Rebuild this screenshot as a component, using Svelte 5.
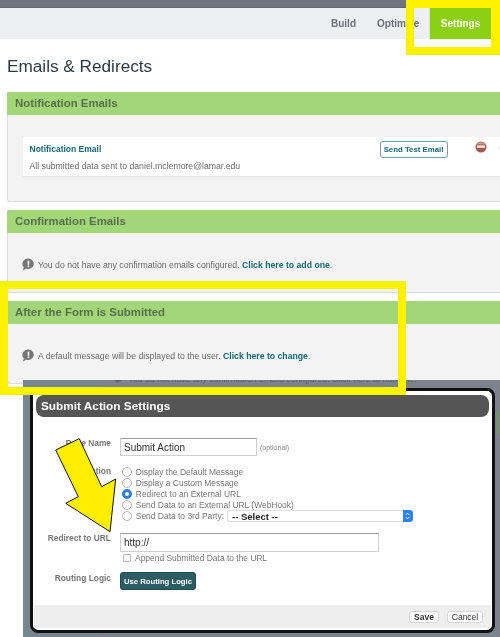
<script>
  const radios = [
    { label: 'Display the Default Message', checked: false },
    { label: 'Display a Custom Message', checked: false },
    { label: 'Redirect to an External URL', checked: true },
    { label: 'Send Data to an External URL (WebHook)', checked: false }
  ];
</script>

{#snippet note()}
  <svg class="note" viewBox="0 0 12 13" width="12" height="13" aria-hidden="true">
    <path d="M6.4 0.6a5.4 5.2 0 1 1-2.6 9.8C3 11.4 1.8 12.2 0.6 12.4c0.7-0.8 1.1-1.9 1.2-3.2A5.4 5.2 0 0 1 6.4 0.6z" fill="#757575" />
    <rect x="5.6" y="2.6" width="1.7" height="4.2" fill="#f3f3f3" />
    <rect x="5.6" y="7.5" width="1.7" height="1.6" fill="#f3f3f3" />
  </svg>
{/snippet}

<div class="page">
  <div class="content">
    <div class="topbar"></div>
    <nav class="nav">
      <span class="tab build">Build</span>
      <span class="tab optimize">Optimize</span>
      <span class="tab settings">Settings</span>
    </nav>

    <h1>Emails &amp; Redirects</h1>

    <section class="panel first">
      <h2>Notification Emails</h2>
      <div class="body rowbody">
        <div class="row">
          <div class="rowtext">
            <a href="#n" class="rowtitle">Notification Email</a>
            <p>All submitted data sent to daniel.mclemore@lamar.edu</p>
          </div>
          <button class="test">Send Test Email</button>
          <svg class="del" viewBox="0 0 12 12" width="12" height="12" aria-hidden="true">
            <circle cx="6" cy="6" r="5.5" fill="#a5584a" />
            <path d="M1.4 3.4A5.5 5.5 0 0 1 10.6 3.4z" fill="#c99a8e" />
            <rect x="2" y="4.4" width="8" height="2.4" fill="#f4ece8" />
          </svg>
          <span class="other"></span>
        </div>
      </div>
    </section>

    <section class="panel">
      <h2>Confirmation Emails</h2>
      <div class="body msgbody">
        {@render note()}
        <p>You do not have any confirmation emails configured. <a href="#a">Click here to add one</a>.</p>
      </div>
    </section>

    <section class="panel">
      <h2>After the Form is Submitted</h2>
      <div class="body msgbody">
        {@render note()}
        <p>A default message will be displayed to the user. <a href="#c">Click here to change</a>.</p>
      </div>
    </section>
  </div>

  <div class="overlay">
    <div class="behind">
      <svg viewBox="0 0 12 13" width="10" height="11" aria-hidden="true"><circle cx="6" cy="6" r="5" fill="#5d666d" /></svg>
      <span>You do not have any confirmation emails configured. Click here to add one.</span>
    </div>
    <div class="peek"></div>
    <div class="modal">
      <div class="mtitle">Submit Action Settings</div>
      <div class="form">
        <div class="label namelabel">Page Name</div>
        <div class="namefield">
          <input class="text name" value="Submit Action" />
          <span class="opt">(optional)</span>
        </div>

        <div class="label">Action</div>
        <div class="radios">
          {#each radios as r}
            <label class="radio"><input type="radio" name="act" checked={r.checked} />{r.label}</label>
          {/each}
          <label class="radio last">
            <input type="radio" name="act" />Send Data to 3rd Party:
            <span class="selectwrap">
              <select><option>-- Select --</option></select>
              <span class="cap">
                <svg viewBox="0 0 8 12" width="7" height="10" aria-hidden="true">
                  <path d="M2 4.6 4 2.6 6 4.6M2 7.4 4 9.4 6 7.4" fill="none" stroke="#fff" stroke-width="1.2" />
                </svg>
              </span>
            </span>
          </label>
        </div>

        <div class="label">Redirect to URL</div>
        <div class="urlfield">
          <input class="text url" value="http://" />
          <label class="check"><input type="checkbox" />Append Submitted Data to the URL</label>
        </div>

        <div class="label routelabel">Routing Logic</div>
        <div><button class="route">Use Routing Logic</button></div>
      </div>
      <div class="footer">
        <button class="fbtn save">Save</button>
        <button class="fbtn">Cancel</button>
      </div>
    </div>
  </div>

  <div class="frame frame-top"></div>
  <div class="frame frame-form"></div>

  <svg class="arrow" viewBox="0 0 500 637" width="500" height="637" aria-hidden="true">
    <polygon points="55.7,450 79.3,438.7 101.7,486.7 115.7,479 110,531.7 65.7,503.3 78.3,496.7" fill="#ffee00" stroke="#111" stroke-width="1" />
  </svg>
</div>

<style>
  :global(body) {
    margin: 0;
    background: #fff;
  }
  .page {
    position: relative;
    width: 500px;
    height: 637px;
    overflow: hidden;
    font-family: "Liberation Sans", Arial, sans-serif;
    font-size: 10px;
    color: #6b6b6b;
  }
  .content,
  .overlay {
    filter: blur(0.35px);
  }
  .topbar {
    height: 7px;
    background: #6d7680;
    border-bottom: 1px solid #5f6871;
  }
  .nav {
    height: 31px;
    background: #eeeff1;
    display: flex;
    justify-content: flex-end;
    align-items: stretch;
    padding-right: 9px;
  }
  .tab {
    display: flex;
    align-items: center;
    font-weight: 700;
    font-size: 10px;
    color: #6e7276;
  }
  .build {
    margin-right: 21px;
  }
  .optimize {
    width: 52px;
  }
  .settings {
    width: 62px;
    justify-content: center;
    background: #8bd012;
    color: #fff;
    border-left: 1px solid #dcdcdc;
    box-sizing: border-box;
  }
  h1 {
    margin: 16px 0 0 7px;
    height: 37px;
    font-weight: 400;
    font-size: 17.2px;
    line-height: 23px;
    color: #2b3a44;
  }
  .panel {
    margin: 8px 0 0 7px;
    background: #f3f3f3;
    border-left: 1px solid #dddddd;
    border-bottom: 1px solid #dddddd;
    border-radius: 0 0 0 3px;
  }
  .panel.first {
    margin-top: 0;
  }
  h2 {
    margin: 0 0 0 -1px;
    height: 23px;
    background: #a3d678;
    font-size: 11.4px;
    line-height: 23px;
    padding-left: 8px;
    color: #55704a;
    border-radius: 2px 0 0 0;
  }
  .rowbody {
    height: 86px;
    padding: 21.5px 0 0 15px;
    box-sizing: border-box;
  }
  .row {
    position: relative;
    height: 40px;
    background: #fff;
    border-bottom: 1px solid #e6e6e6;
    box-sizing: border-box;
    display: flex;
    align-items: flex-start;
    overflow: hidden;
  }
  .row > * {
    flex: none;
  }
  .rowtext {
    margin: 6px 0 0 6.5px;
    width: 350px;
  }
  .rowtitle {
    display: block;
    font-size: 8.5px;
    font-weight: 700;
    line-height: 12px;
    color: #126a78;
    text-decoration: none;
  }
  .rowtext p {
    margin: 5px 0 0;
    font-size: 8.7px;
    line-height: 12px;
    white-space: nowrap;
  }
  .test {
    margin-top: 4px;
    width: 68px;
    height: 17px;
    padding: 0;
    font: 700 7.8px "Liberation Sans", Arial, sans-serif;
    color: #126a78;
    background: #fff;
    border: 1.5px solid #7c9ea6;
    border-radius: 3px;
    white-space: nowrap;
  }
  .del {
    margin: 4px 0 0 27px;
  }
  .other {
    margin: 6px 0 0 12px;
    width: 10px;
    height: 10px;
    border-radius: 50%;
    background: #e6e6e6;
  }
  .msgbody {
    height: 59px;
    display: flex;
    align-items: center;
    padding: 4px 0 0 14px;
    box-sizing: border-box;
    gap: 4px;
  }
  .msgbody p {
    margin: 0;
    font-size: 8.7px;
    white-space: nowrap;
  }
  .msgbody a {
    color: #126a78;
    font-weight: 700;
    text-decoration: none;
  }
  .note {
    flex: none;
  }
  .overlay {
    position: absolute;
    left: 23px;
    right: 0;
    top: 380px;
    bottom: 0;
    background: linear-gradient(90deg, #768790 0 76px, #7b848c 76px);
    overflow: hidden;
    padding: 8px 5px 4px 7px;
    box-sizing: border-box;
  }
  .behind {
    position: absolute;
    left: 90px;
    top: -7px;
    display: flex;
    align-items: center;
    gap: 5px;
    font-size: 8.7px;
    white-space: nowrap;
    color: #5d666d;
  }
  .peek {
    position: absolute;
    right: 0;
    top: 31px;
    width: 3px;
    height: 22px;
    background: #74906e;
  }
  .modal {
    height: 245px;
    box-sizing: border-box;
    background: #fff;
    border: 3px solid #111;
    border-radius: 8px;
    padding: 4px 1px 2px 1px;
    display: flex;
    flex-direction: column;
    position: relative;
  }
  .mtitle {
    margin: 0 2px 0 2px;
    height: 22px;
    line-height: 22px;
    background: #555;
    border-radius: 8px;
    padding-left: 5px;
    color: #fff;
    font-weight: 700;
    font-size: 11.8px;
  }
  .form {
    flex: 1;
    display: grid;
    grid-template-columns: 77px 1fr;
    column-gap: 9px;
    align-content: start;
    padding-top: 21px;
  }
  .label {
    text-align: right;
    font-weight: 700;
    font-size: 8.4px;
    line-height: 10px;
    color: #777;
    white-space: nowrap;
  }
  .routelabel {
    padding-top: 1px;
  }
  .namefield {
    display: flex;
    align-items: center;
    gap: 3px;
    height: 18px;
    margin-bottom: 10px;
  }
  .text {
    box-sizing: border-box;
    height: 18px;
    padding: 0 3px;
    border: 1px solid #cfcfcf;
    border-top: 1px solid #9a9a9a;
    font: 10px "Liberation Sans", Arial, sans-serif;
    color: #333;
    outline: none;
    background: #fff;
  }
  .name {
    width: 137px;
  }
  .opt {
    font-size: 7px;
    color: #888;
    margin-top: 1px;
  }
  .radios {
    height: 67px;
    display: flex;
    flex-direction: column;
  }
  .radio {
    height: 11.2px;
    display: flex;
    align-items: center;
    font-size: 8.45px;
    color: #777;
    white-space: nowrap;
  }
  input[type='radio'] {
    appearance: none;
    box-sizing: border-box;
    margin: 0 3.5px 0 2.3px;
    width: 10px;
    height: 10px;
    border-radius: 50%;
    border: 1px solid #bbb;
    background: #fafafa;
    flex: none;
  }
  input[type='radio']:checked {
    border: 3px solid #2d7ce0;
    background: #fff;
  }
  .selectwrap {
    display: flex;
    margin-left: 3px;
    height: 12px;
  }
  select {
    appearance: none;
    width: 176px;
    height: 12px;
    box-sizing: border-box;
    padding: 0 0 0 4px;
    border: 1px solid #ddd;
    border-right: none;
    border-radius: 3px 0 0 3px;
    background: #fff;
    font: 700 9.5px "Liberation Sans", Arial, sans-serif;
    color: #222;
    outline: none;
  }
  .cap {
    width: 10px;
    height: 12px;
    background: #2b84f0;
    border-radius: 0 3px 3px 0;
    display: flex;
    align-items: center;
    justify-content: center;
  }
  .urlfield {
    height: 39px;
  }
  .url {
    display: block;
    width: 259px;
    height: 19px;
  }
  .check {
    display: flex;
    align-items: center;
    height: 12px;
    font-size: 8.45px;
    color: #777;
    white-space: nowrap;
  }
  input[type='checkbox'] {
    appearance: none;
    box-sizing: border-box;
    margin: 0 4px 0 3px;
    width: 8px;
    height: 8px;
    border: 1px solid #bbb;
    border-radius: 1px;
    background: #fafafa;
    flex: none;
  }
  .route {
    width: 76px;
    height: 18px;
    padding: 0;
    border: 1px solid #1f4a50;
    border-radius: 3px;
    background: #2b5d63;
    color: #fff;
    font: 700 7.7px "Liberation Sans", Arial, sans-serif;
    white-space: nowrap;
  }
  .footer {
    height: 23px;
    background: #eee;
    display: flex;
    justify-content: flex-end;
    align-items: center;
    gap: 8px;
    padding-right: 8px;
  }
  .fbtn {
    width: 36px;
    height: 12px;
    padding: 0;
    border: 1px solid #d5d5d5;
    border-radius: 3px;
    background: #fff;
    font: 8.5px "Liberation Sans", Arial, sans-serif;
    color: #333;
  }
  .save {
    width: 30px;
    font-weight: 700;
  }
  .frame {
    position: absolute;
    box-sizing: border-box;
    border: 8px solid #fff200;
    pointer-events: none;
  }
  .frame-top {
    left: 406px;
    top: 0;
    width: 94px;
    height: 55px;
    border-right-width: 9px;
  }
  .frame-form {
    left: 0;
    top: 281px;
    width: 406px;
    height: 114px;
  }
  .arrow {
    position: absolute;
    left: 0;
    top: 0;
    pointer-events: none;
  }
</style>
